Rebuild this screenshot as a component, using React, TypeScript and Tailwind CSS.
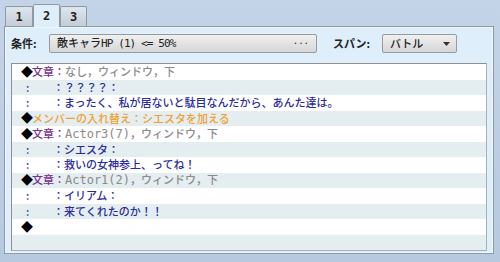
import { ReactNode } from 'react'

const jp = { fontFamily: '"Noto Sans CJK JP", sans-serif' }
const mono = { fontFamily: '"DejaVu Sans Mono", "Noto Sans CJK JP", monospace' }

type Row = { lead: 'cmd' | 'cont' | null; body: ReactNode }

function Cmd({ label, args, latin }: { label: string; args: string; latin?: string }) {
  return (
    <>
      <span className="text-[#7a2f8f]">{label}：</span>
      {latin && (
        <span className="text-[#8a8a8a] text-[12px] font-normal" style={mono}>
          {latin}
        </span>
      )}
      <span className="text-[#8a8a8a]">{args}</span>
    </>
  )
}

function Say({ text }: { text: string }) {
  return (
    <span className="text-[#2b2b9c]">
      <span className="inline-block w-[32px] text-right">：</span>
      {text}
    </span>
  )
}

const rows: Row[] = [
  { lead: 'cmd', body: <Cmd label="文章" args="なし，ウィンドウ，下" /> },
  { lead: 'cont', body: <Say text="？？？？：" /> },
  { lead: 'cont', body: <Say text="まったく、私が居ないと駄目なんだから、あんた達は。" /> },
  {
    lead: 'cmd',
    body: <span className="text-[#f0a030]">メンバーの入れ替え：シエスタを加える</span>,
  },
  { lead: 'cmd', body: <Cmd label="文章" latin="Actor3(7)" args="，ウィンドウ，下" /> },
  { lead: 'cont', body: <Say text="シエスタ：" /> },
  { lead: 'cont', body: <Say text="救いの女神参上、ってね！" /> },
  { lead: 'cmd', body: <Cmd label="文章" latin="Actor1(2)" args="，ウィンドウ，下" /> },
  { lead: 'cont', body: <Say text="イリアム：" /> },
  { lead: 'cont', body: <Say text="来てくれたのか！！" /> },
  { lead: 'cmd', body: null },
  { lead: null, body: null },
]

export default function App() {
  return (
    <div
      className="w-[500px] h-[262px] bg-gradient-to-b from-[#c3d4e8] to-[#b7c9df] px-[4px] pt-[4px] text-[12px]"
      style={jp}
    >
      <div className="flex items-end h-[22px] pl-[1px]" style={mono}>
        <div className="w-[28px] h-[20px] flex items-center justify-center bg-gradient-to-b from-[#dfe6ee] to-[#c4ccd6] border border-[#8e9aa8] border-b-0 rounded-t-[2px] font-bold text-[#222]">
          1
        </div>
        <div className="relative z-10 w-[27px] h-[23px] -mb-[1px] flex items-center justify-center bg-[#dfeefb] border border-[#8e9aa8] border-b-0 rounded-t-[2px] font-bold text-[#222]">
          2
        </div>
        <div className="w-[27px] h-[20px] flex items-center justify-center bg-gradient-to-b from-[#dfe6ee] to-[#c4ccd6] border border-[#8e9aa8] border-b-0 rounded-t-[2px] font-bold text-[#222]">
          3
        </div>
      </div>
      <div className="w-[490px] h-[228px] bg-[#dfeefb] border border-[#8e9aa8] shadow-[inset_0_0_0_1px_#eef6fd] px-[6px] pt-[7px]">
        <div className="flex items-center h-[19px] text-[11px]">
          <span className="w-[38px] font-bold text-[#222]">条件:</span>
          <div className="w-[268px] h-[19px] flex items-center justify-between px-[7px] border border-[#9a9a9a] rounded-[2px] bg-gradient-to-b from-[#f0f0f0] to-[#d6d6d6] text-[#222] font-medium">
            <span>
              敵キャラ
              <span className="tracking-[-0.9px] font-normal" style={mono}>
                HP (1) &lt;= 50%
              </span>
            </span>
            <span className="text-[9px] -mt-[3px]" style={mono}>
              ...
            </span>
          </div>
          <span className="ml-[16px] w-[49px] font-bold text-[#222]">スパン:</span>
          <div className="w-[75px] h-[19px] flex items-center justify-between pl-[7px] pr-[6px] border border-[#9a9a9a] rounded-[2px] bg-gradient-to-b from-[#f0f0f0] to-[#d6d6d6] text-[#222] font-medium">
            <span>バトル</span>
            <svg width="7" height="4" viewBox="0 0 7 4">
              <path d="M0 0h7L3.5 4z" fill="#333" />
            </svg>
          </div>
        </div>
        <div className="mt-[10px] w-[476px] h-[188px] border border-[#8f8f8f] border-r-[#a8b0b8] border-b-[#a8b0b8] bg-white overflow-hidden">
          {rows.map((r, i) => (
            <div
              key={i}
              className={`flex items-center h-[15.5px] leading-none text-[11px] font-medium ${
                i % 2 === 0 ? 'bg-white' : 'bg-[#e4edf0]'
              }`}
            >
              <span className="w-[20px] shrink-0 flex">
                {r.lead === 'cmd' && <span className="pl-[9px] text-black text-[12px]">◆</span>}
                {r.lead === 'cont' && <span className="pl-[14px] text-[#3a3a80]">:</span>}
              </span>
              <span className="whitespace-nowrap">{r.body}</span>
            </div>
          ))}
        </div>
      </div>
    </div>
  )
}
